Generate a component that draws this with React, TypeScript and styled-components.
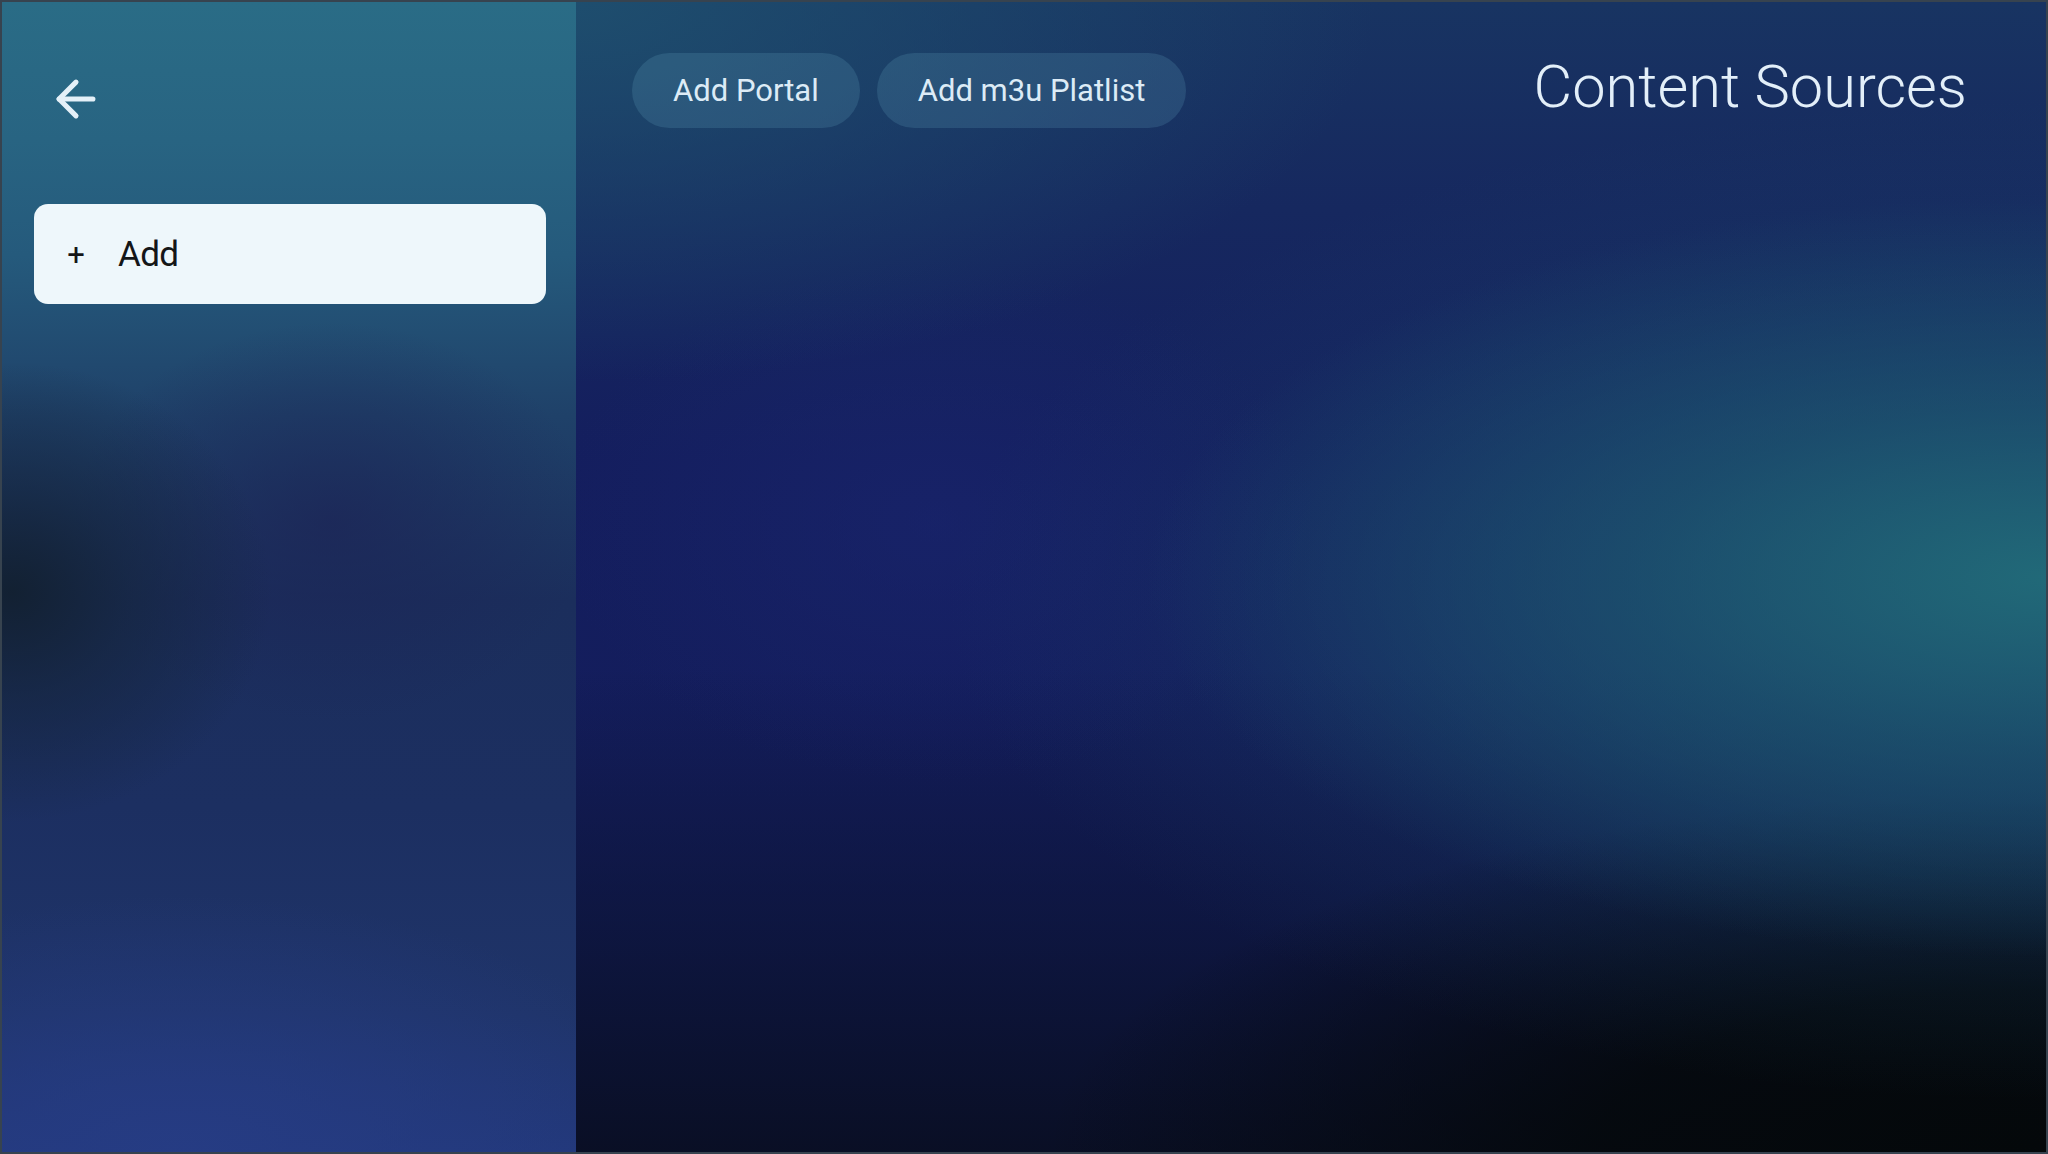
import React from "react";
import styled, { createGlobalStyle } from "styled-components";

const Global = createGlobalStyle`
  html, body { margin: 0; padding: 0; width: 100%; height: 100%; overflow: hidden; background: #0b1430; }
  #root { width: 100%; height: 100%; }
  * { box-sizing: border-box; }
`;

const Screen = styled.div`
  width: 2048px;
  height: 1154px;
  display: flex;
  border: 2px solid #37434f;
  font-family: Roboto, "Noto Sans", "Liberation Sans", sans-serif;
  overflow: hidden;
`;

const Sidebar = styled.aside`
  width: 574px;
  flex: none;
  display: flex;
  flex-direction: column;
  padding: 68px 30px 0 32px;
  background:
    radial-gradient(ellipse 260px 230px at 10px 590px, rgba(18, 32, 48, 0.95) 0%, rgba(20, 36, 58, 0.6) 45%, rgba(20, 36, 58, 0) 100%),
    radial-gradient(ellipse 260px 200px at 330px 520px, rgba(28, 36, 86, 0.7) 0%, rgba(28, 36, 86, 0) 100%),
    radial-gradient(ellipse 520px 260px at 180px 1154px, rgba(38, 60, 132, 0.95) 0%, rgba(38, 60, 132, 0) 100%),
    linear-gradient(180deg, #2a6c86 0%, #286482 12%, #255a7c 22%, #1f4169 36%, #1b2e5c 52%, #1c2f61 70%, #1f3469 88%, #22387a 100%);
`;

const BackButton = styled.button`
  width: 58px;
  height: 58px;
  margin-left: 13px;
  padding: 0;
  border: none;
  background: transparent;
  color: #e4f0f8;
  cursor: pointer;
  display: flex;
  align-items: center;
  justify-content: center;
  svg { display: block; }
`;

const AddCard = styled.button`
  margin-top: 76px;
  width: 512px;
  height: 100px;
  border: none;
  border-radius: 14px;
  background: #eef7fb;
  display: flex;
  align-items: center;
  padding: 0 0 0 32px;
  gap: 32px;
  font-family: Roboto, "Noto Sans", "Liberation Sans", sans-serif;
  color: #141618;
  cursor: pointer;
`;

const Plus = styled.span`
  font-size: 31px;
  font-weight: 400;
  line-height: 1;
  width: 20px;
  text-align: center;
`;

const CardLabel = styled.span`
  font-size: 35px;
  font-weight: 400;
  letter-spacing: -0.6px;
  line-height: 1;
`;

const Main = styled.main`
  flex: 1;
  display: flex;
  flex-direction: column;
  padding: 51px 79px 0 56px;
  background:
    radial-gradient(ellipse 900px 380px at 100% 50%, rgba(34, 110, 122, 0.9) 0%, rgba(30, 94, 114, 0.6) 45%, rgba(30, 94, 114, 0) 100%),
    radial-gradient(ellipse 1100px 500px at 100% 52%, rgba(28, 82, 110, 0.6) 0%, rgba(28, 82, 110, 0) 100%),
    radial-gradient(ellipse 1000px 360px at 100% 100%, rgba(4, 8, 10, 1) 0%, rgba(4, 8, 10, 0.85) 45%, rgba(4, 8, 10, 0) 100%),
    radial-gradient(ellipse 800px 380px at 0% 0%, rgba(31, 82, 112, 0.85) 0%, rgba(31, 82, 112, 0) 100%),
    radial-gradient(ellipse 380px 260px at 360px 520px, rgba(26, 38, 112, 0.55) 0%, rgba(26, 38, 112, 0) 100%),
    linear-gradient(180deg, rgba(10, 16, 40, 0) 0%, rgba(10, 16, 40, 0) 58%, rgba(12, 20, 56, 0.75) 80%, rgba(9, 14, 34, 0.95) 100%),
    linear-gradient(180deg, #183462 0%, #16285f 18%, #141e5e 40%, #131c5a 100%);
`;

const TopRow = styled.div`
  display: flex;
  align-items: flex-start;
  justify-content: space-between;
`;

const ActionGroup = styled.div`
  display: flex;
  gap: 17px;
`;

const PillButton = styled.button`
  height: 75px;
  padding: 0 41px;
  border: none;
  border-radius: 38px;
  background: rgba(120, 190, 215, 0.17);
  color: #dcebf6;
  font-family: Roboto, "Noto Sans", "Liberation Sans", sans-serif;
  font-size: 31px;
  font-weight: 400;
  line-height: 1;
  cursor: pointer;
`;

const Title = styled.h1`
  margin: 5px 0 0;
  font-size: 59.5px;
  font-weight: 300;
  line-height: 59px;
  color: #e3eff9;
  letter-spacing: 0;
`;

const ArrowBack = () => (
  <svg width="58" height="58" viewBox="0 0 24 24" fill="none" stroke="currentColor" strokeWidth="2.1" strokeLinecap="round" strokeLinejoin="round">
    <path d="M12 19l-7-7 7-7" />
    <path d="M19 12H5" />
  </svg>
);

export default function App() {
  return (
    <>
      <Global />
      <Screen>
        <Sidebar>
          <BackButton aria-label="Back">
            <ArrowBack />
          </BackButton>
          <AddCard>
            <Plus>+</Plus>
            <CardLabel>Add</CardLabel>
          </AddCard>
        </Sidebar>
        <Main>
          <TopRow>
            <ActionGroup>
              <PillButton>Add Portal</PillButton>
              <PillButton>Add m3u Platlist</PillButton>
            </ActionGroup>
            <Title>Content Sources</Title>
          </TopRow>
        </Main>
      </Screen>
    </>
  );
}
